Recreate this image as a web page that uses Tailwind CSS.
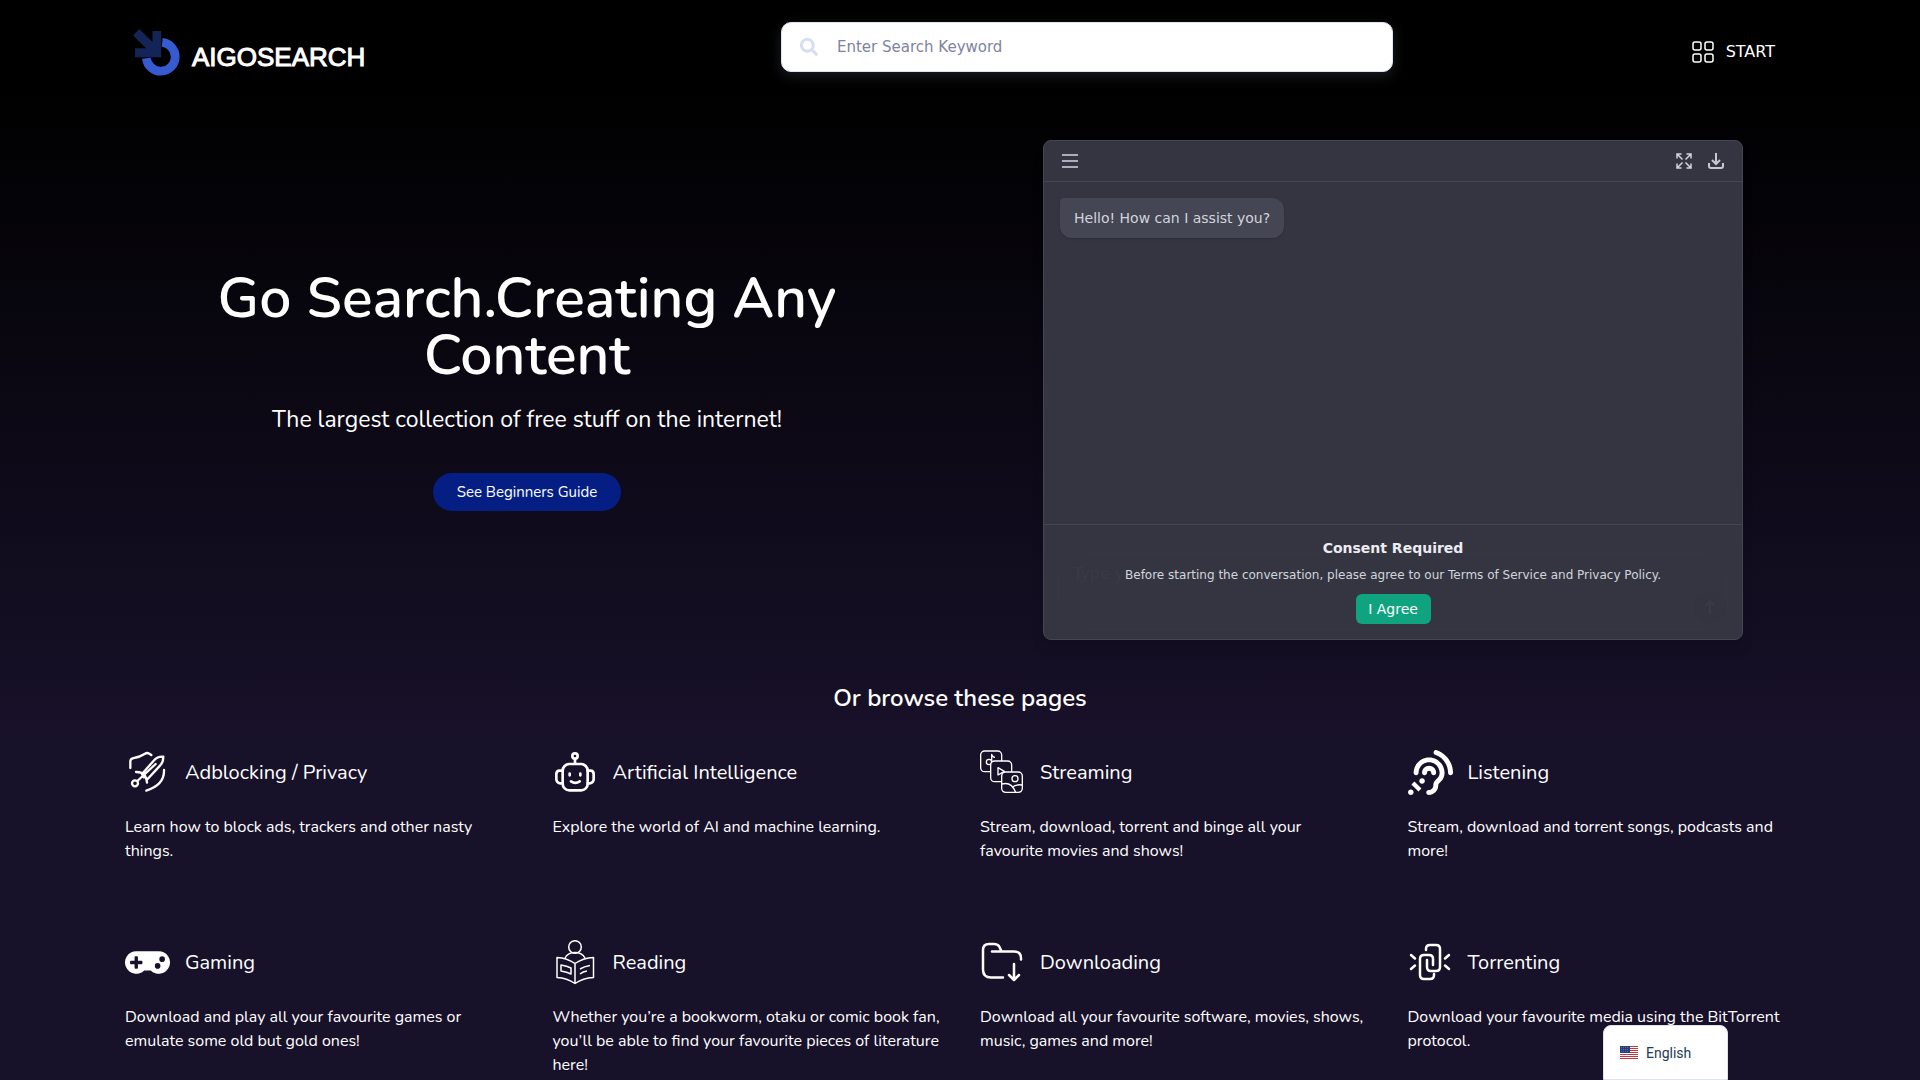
<!DOCTYPE html>
<html lang="en">
<head>
    <meta charset="UTF-8">
    <meta name="viewport" content="width=device-width, initial-scale=1.0">
    <script src="https://cdn.jsdelivr.net/npm/@tailwindcss/browser@4"></script>
    <title>AIGOSEARCH</title>
</head>
<body class="bg-[#18112a] text-white font-[Nunito,Lato,sans-serif] overflow-x-hidden">
    <div class="min-h-screen bg-linear-to-b/srgb from-black from-8% to-[#18112a] to-66%">
        <header class="grid grid-cols-[1fr_minmax(0,612px)_397px] items-start px-[130px] pt-[22px]">
            <a href="/" class="flex items-center gap-3 mt-[7px] ml-[3px]">
                <svg class="w-[47px] h-[47px]" viewBox="69 57 140 140" fill="none">
                    <path d="M156 97A43 43 0 1 1 109 144" stroke="#365ad0" stroke-width="26"/>
                    <path d="M88 57L127 96V63H153V141H75V114H108L69 76Z" fill="#142457"/>
                </svg>
                <span class="mt-2 font-['Liberation_Sans',sans-serif] text-[26px] leading-8 [-webkit-text-stroke:1px_white]">AIGOSEARCH</span>
            </a>
            <form class="relative">
                <svg class="absolute left-[19px] top-4 w-[18px] h-[18px]" viewBox="0 0 512 512" fill="#d6dcf2"><path d="M505 442.700L405.300 343c-4.500-4.500-10.600-7-17-7H372c27.600-35.300 44-79.700 44-128C416 93.100 322.900 0 208 0S0 93.100 0 208s93.100 208 208 208c48.300 0 92.700-16.400 128-44v16.300c0 6.400 2.500 12.500 7 17l99.700 99.700c9.400 9.400 24.600 9.400 33.900 0l28.300-28.300c9.400-9.400 9.400-24.600.1-34zM208 336c-70.700 0-128-57.200-128-128 0-70.700 57.200-128 128-128 70.700 0 128 57.200 128 128 0 70.700-57.200 128-128 128z"/></svg>
                <input type="search" aria-label="Search" placeholder="Enter Search Keyword" class="w-full h-[50px] pl-[55px] pr-4 rounded-[10px] bg-white border border-[#dfe3f2] text-[15px] text-gray-800 placeholder:text-[#7d83a3] font-['DejaVu_Sans',sans-serif] shadow-[0_4px_14px_rgba(110,120,140,0.25)] outline-none">
            </form>
            <a href="#" class="justify-self-end mr-[15px] mt-[18px] flex items-center gap-3 font-['DejaVu_Sans',sans-serif] text-base leading-6">
                <svg class="w-[22px] h-[22px]" viewBox="0 0 22 22" fill="none" stroke="white" stroke-width="1.500"><rect x="1" y="1" width="8" height="8" rx="2"/><rect x="13" y="1" width="8" height="8" rx="2"/><rect x="1" y="13" width="8" height="8" rx="2"/><rect x="13" y="13" width="8" height="8" rx="2"/></svg>
                START
            </a>
        </header>

        <section class="max-w-[1732px] mx-auto mt-16 grid grid-cols-2 items-center">
            <div class="text-center">
                <h1 class="max-w-[680px] mx-auto text-[57px] leading-[57px] font-semibold">Go Search.Creating Any Content</h1>
                <p class="mt-[18px] text-[23px] leading-9">The largest collection of free stuff on the internet!</p>
                <a href="#" class="inline-block mt-[35px] px-6 rounded-full bg-[#041e84] text-[15px] leading-[38px]">See Beginners Guide</a>
            </div>
            <!-- chat widget -->
            <div class="w-full max-w-[700px] h-[500px] mx-auto flex flex-col rounded-lg border border-[#444654] bg-[#343541] text-[#d1d5db] font-['DejaVu_Sans',sans-serif] overflow-hidden shadow-lg">
                <div class="h-[41px] flex items-center px-[18px] border-b border-[#444654] shrink-0">
                    <button aria-label="Menu"><svg class="w-4 h-4" viewBox="0 0 16 16" stroke="#acacbe" stroke-width="2"><path d="M0 2H16M0 8H16M0 14H16"/></svg></button>
                    <button aria-label="Full screen" class="ml-auto"><svg class="w-4 h-4" viewBox="0 0 16 16" fill="none" stroke="#d1d5db" stroke-width="1.500"><path d="M1 5.500V1H5.500M1 1L6.500 6.500M10.500 1H15V5.500M15 1L9.500 6.500M1 10.500V15H5.500M1 15L6.500 9.500M15 10.500V15H10.500M15 15L9.500 9.500"/></svg></button>
                    <button aria-label="Download" class="ml-4"><svg class="w-4 h-4" viewBox="0 0 16 16" fill="none" stroke="#c5c8d2" stroke-width="2"><path d="M8 0V11M4 7L8 11L12 7M1 10V13Q1 15 3 15H13Q15 15 15 13V10"/></svg></button>
                </div>
                <div class="flex-1 px-4 py-4">
                    <p class="w-fit px-[14px] py-2.5 rounded-xl rounded-tl-sm bg-[#444654] text-sm leading-5 shadow-sm">Hello! How can I assist you?</p>
                </div>
                <div class="relative h-[115px] border-t border-[#444654] shrink-0">
                    <textarea aria-label="Message" placeholder="Type your message..." class="absolute inset-x-3.5 top-7 h-[77px] px-3.5 py-2 rounded-3xl border border-[#363742] text-base placeholder:text-[#393a45] resize-none"></textarea>
                    <button aria-label="Send" class="absolute right-4 top-[66px] w-8 h-8 flex items-center justify-center rounded-full bg-[#33343f]"><svg class="w-4 h-4" viewBox="0 0 16 16" fill="none" stroke="#393a45" stroke-width="2"><path d="M8 15V2M3 7L8 2L13 7"/></svg></button>
                    <div class="absolute inset-0 pt-[13px] text-center">
                        <h2 class="text-sm leading-5 font-bold text-[#ececf1]">Consent Required</h2>
                        <p class="mt-[9px] text-xs leading-4">Before starting the conversation, please agree to our Terms of Service and Privacy Policy.</p>
                        <button class="mt-[11px] w-[75px] h-[30px] rounded-md bg-[#10a37f] text-white text-sm">I Agree</button>
                    </div>
                </div>
            </div>
        </section>

        <section class="max-w-[1710px] mx-auto pt-10">
            <h2 class="text-center text-2xl leading-9 font-semibold">Or browse these pages</h2>
            <div class="mt-[34px] grid grid-cols-4 auto-rows-[minmax(190px,auto)]">
                <a href="#" class="block px-5">
                    <div class="flex items-center gap-[15px]">
                        <svg class="w-[45px] h-[45px]" viewBox="0 0 135 135" fill="none" stroke="white" stroke-width="7" stroke-linecap="round" stroke-linejoin="round"><path d="M16 54V34Q16 27 23 25Q45 21 60 11Q66 7 73 11L79 15M117 60Q119 104 64 122M56 82L51 72L88 30Q97 19 115 20Q115 37 105 47L68 87M92 42L37 93M33 66Q63 65 66 98"/><circle cx="30" cy="100" r="9"/></svg>
                        <h3 class="text-xl leading-8">Adblocking / Privacy</h3>
                    </div>
                    <p class="mt-5 text-base leading-6">Learn how to block ads, trackers and other nasty things.</p>
                </a>
                <a href="#" class="block px-5">
                    <div class="flex items-center gap-[15px]">
                        <svg class="w-[45px] h-[45px]" viewBox="0 0 135 135" fill="none" stroke="white" stroke-width="8" stroke-linecap="round"><circle cx="66" cy="18" r="8"/><path d="M66 27V40M29 62H20Q10 62 10 73V87Q10 98 22 100H29M104 62H112Q122 62 122 73V87Q122 98 110 100H104M50 71V76M82 71V76M54 94Q67 103 80 94"/><rect x="29" y="42" width="75" height="79" rx="20"/></svg>
                        <h3 class="text-xl leading-8">Artificial Intelligence</h3>
                    </div>
                    <p class="mt-5 text-base leading-6">Explore the world of AI and machine learning.</p>
                </a>
                <a href="#" class="block px-5">
                    <div class="flex items-center gap-[15px]">
                        <svg class="w-[45px] h-[45px]" viewBox="0 0 135 135" fill="#18112a" stroke="white" stroke-width="4" stroke-linejoin="round"><rect x="2" y="3" width="63" height="62" rx="12"/><circle cx="27" cy="36" r="8"/><path d="M35 36V13Q37 21 45 22"/><rect x="32" y="33" width="63" height="62" rx="12"/><path d="M54 53L73 64L54 75Z"/><rect x="65" y="66" width="62" height="61" rx="12"/><circle cx="105" cy="86" r="9"/><path d="M66 102Q94 94 107 127M97 112Q108 102 126 105" fill="none"/></svg>
                        <h3 class="text-xl leading-8">Streaming</h3>
                    </div>
                    <p class="mt-5 text-base leading-6">Stream, download, torrent and binge all your favourite movies and shows!</p>
                </a>
                <a href="#" class="block px-5">
                    <div class="flex items-center gap-[15px]">
                        <svg class="w-[45px] h-[45px]" viewBox="0 0 512 512" fill="white"><path d="M216 260c0 15.464-12.536 28-28 28s-28-12.536-28-28c0-44.112 35.888-80 80-80s80 35.888 80 80c0 15.464-12.536 28-28 28s-28-12.536-28-28c0-13.234-10.767-24-24-24s-24 10.766-24 24zm24-176c-97.047 0-176 78.953-176 176 0 15.464 12.536 28 28 28s28-12.536 28-28c0-66.168 53.832-120 120-120s120 53.832 120 120c0 75.164-71.009 70.311-71.997 143.622L288 404c0 28.673-23.327 52-52 52-15.464 0-28 12.536-28 28s12.536 28 28 28c59.475 0 107.876-48.328 108-107.774.595-34.428 72-48.240 72-144.226 0-97.047-78.953-176-176-176zm-80 236c-17.673 0-32 14.327-32 32s14.327 32 32 32 32-14.327 32-32-14.327-32-32-32zM32 448c-17.673 0-32 14.327-32 32s14.327 32 32 32 32-14.327 32-32-14.327-32-32-32zm480-187.993c0-1.518-.012-3.025-.045-4.531C510.076 140.525 436.157 38.470 327.994 1.511c-14.633-4.998-30.549 2.809-35.550 17.442s2.810 30.550 17.442 35.550c85.906 29.354 144.610 110.513 146.077 201.953l.003.188c.026 1.118.033 2.236.033 3.363 0 15.464 12.536 28 28 28s28.001-12.536 28.001-28zM152.971 439.029l-80-80L39.030 392.970l80 80 33.941-33.941z"/></svg>
                        <h3 class="text-xl leading-8">Listening</h3>
                    </div>
                    <p class="mt-5 text-base leading-6">Stream, download and torrent songs, podcasts and more!</p>
                </a>
                <a href="#" class="block px-5">
                    <div class="flex items-center gap-[15px]">
                        <svg class="w-[45px] h-[45px]" viewBox="0 0 640 512" fill="white"><path d="M480.070 96H160a160 160 0 1 0 114.240 272h91.500A160 160 0 1 0 480.070 96zM248 268a12 12 0 0 1-12 12h-52v52a12 12 0 0 1-12 12h-24a12 12 0 0 1-12-12v-52H84a12 12 0 0 1-12-12v-24a12 12 0 0 1 12-12h52v-52a12 12 0 0 1 12-12h24a12 12 0 0 1 12 12v52h52a12 12 0 0 1 12 12zm216 76a40 40 0 1 1 40-40 40 40 0 0 1-40 40zm64-96a40 40 0 1 1 40-40 40 40 0 0 1-40 40z"/></svg>
                        <h3 class="text-xl leading-8">Gaming</h3>
                    </div>
                    <p class="mt-5 text-base leading-6">Download and play all your favourite games or emulate some old but gold ones!</p>
                </a>
                <a href="#" class="block px-5">
                    <div class="flex items-center gap-[15px]">
                        <svg class="w-[45px] h-[45px]" viewBox="0 0 45 45" fill="none" stroke="white" stroke-width="1.500" stroke-linejoin="round"><circle cx="22" cy="7" r="6.300"/><path d="M12 18Q15 12.500 22 12.500Q29 12.500 32 18M22 23.500Q14 18 4 17.500V37.500Q14 38 22 43.500Q30 38 40.500 37.500V17.500Q30 18 22 23.500V43.500M8 25Q14 26 18 28V34Q14 32 8 31ZM27 29Q31 26.500 37 25.500M27 34Q30 31.500 34 31"/></svg>
                        <h3 class="text-xl leading-8">Reading</h3>
                    </div>
                    <p class="mt-5 text-base leading-6">Whether you’re a bookworm, otaku or comic book fan, you’ll be able to find your favourite pieces of literature here!</p>
                </a>
                <a href="#" class="block px-5">
                    <div class="flex items-center gap-[15px]">
                        <svg class="w-[45px] h-[45px]" viewBox="0 0 45 45" fill="none" stroke="white" stroke-width="2.500" stroke-linecap="round" stroke-linejoin="round"><path d="M23 37.500H11Q3 37.500 3 29.500V10Q3 4 9 4H14Q18 4 19.500 7L21.500 11.500M12 11.500H34Q41 11.500 41 18V19.500M34 24V40M29 35L34 40L39 35"/></svg>
                        <h3 class="text-xl leading-8">Downloading</h3>
                    </div>
                    <p class="mt-5 text-base leading-6">Download all your favourite software, movies, shows, music, games and more!</p>
                </a>
                <a href="#" class="block px-5">
                    <div class="flex items-center gap-[15px]">
                        <svg class="w-[45px] h-[45px]" viewBox="0 0 45 45" fill="none" stroke="white" stroke-width="2.500" stroke-linecap="round" stroke-linejoin="round"><path d="M18 10V9Q18 5 22 5H28Q32 5 32 9V27Q32 31 28 31H23Q19 31 19 27V20M26 34V35Q26 39 22 39H16Q12 39 12 35V19Q12 15 16 15H21Q25 15 25 19V25M3 15L7 18.500M3 29L7 25.500M41 15L37 18.500M41 29L37 25.500"/></svg>
                        <h3 class="text-xl leading-8">Torrenting</h3>
                    </div>
                    <p class="mt-5 text-base leading-6">Download your favourite media using the BitTorrent protocol.</p>
                </a>
            </div>
        </section>
    </div>

    <!-- language switcher -->
    <button class="fixed bottom-0 right-48 w-[125px] h-[55px] pl-4 flex items-center gap-2 rounded-t-lg bg-white border border-[#dfe3ee] text-[#1e3a56] font-[Roboto,sans-serif] text-sm">
        <svg class="w-[18px] h-[13px]" viewBox="0 0 18 13"><path fill="white" d="M0 0H18V13H0Z"/><path stroke="#cc3340" d="M0 .5H18M0 2.500H18M0 4.500H18M0 6.500H18M0 8.500H18M0 10.500H18M0 12.500H18"/><path fill="#2b3d74" d="M0 0H10V7H0Z"/><path stroke="#8d98bd" stroke-width=".5" stroke-dasharray="1 1" d="M1 1.500H9M1 3.500H9M1 5.500H9"/></svg>
        English
    </button>
</body>
</html>
